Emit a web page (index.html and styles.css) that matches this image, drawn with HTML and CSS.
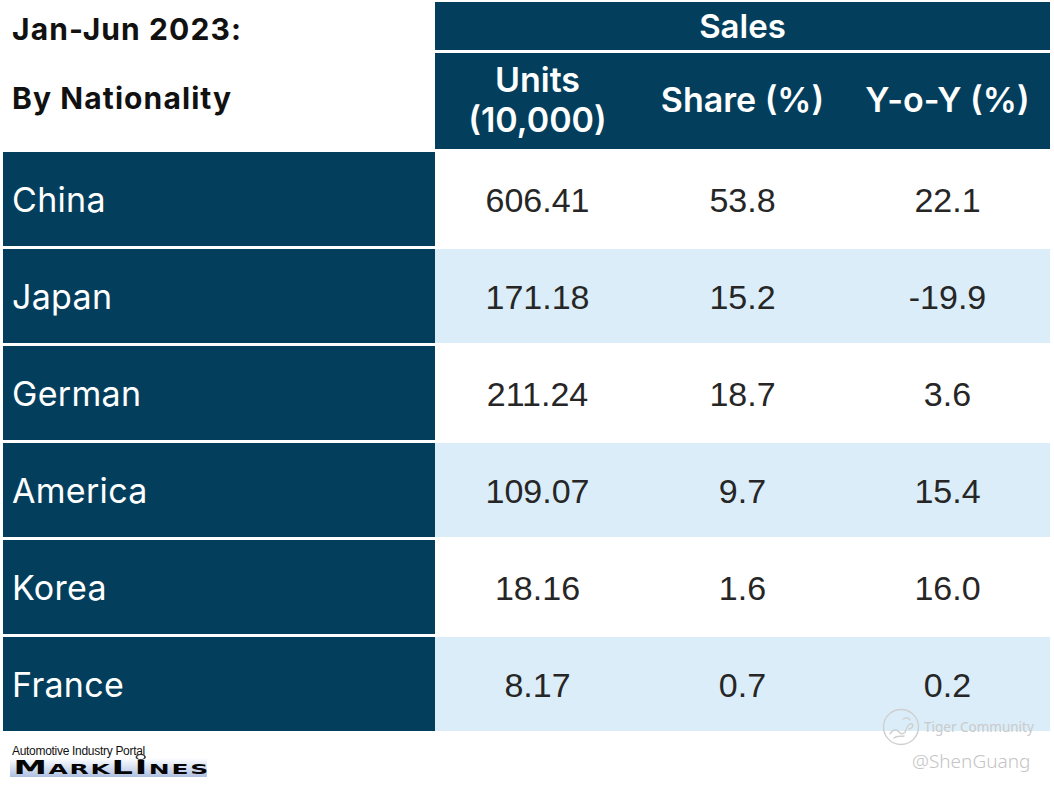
FILE: index.html
```html
<!DOCTYPE html>
<html lang="en">
<head>
<meta charset="utf-8">
<title>Jan-Jun 2023 Sales by Nationality</title>
<link rel="stylesheet" href="styles.css">
</head>
<body>
<div class="page">
  <div class="table">
    <div class="title">
      <div class="title-line">Jan-Jun 2023:</div>
      <div class="title-line">By Nationality</div>
    </div>
    <div class="head head-main">Sales</div>
    <div class="head head-sub">Units<br>(10,000)</div>
    <div class="head head-sub">Share (%)</div>
    <div class="head head-sub">Y-o-Y (%)</div>

    <div class="label">China</div>
    <div class="num">606.41</div><div class="num">53.8</div><div class="num">22.1</div>

    <div class="label">Japan</div>
    <div class="num alt">171.18</div><div class="num alt">15.2</div><div class="num alt">-19.9</div>

    <div class="label">German</div>
    <div class="num">211.24</div><div class="num">18.7</div><div class="num">3.6</div>

    <div class="label">America</div>
    <div class="num alt">109.07</div><div class="num alt">9.7</div><div class="num alt">15.4</div>

    <div class="label">Korea</div>
    <div class="num">18.16</div><div class="num">1.6</div><div class="num">16.0</div>

    <div class="label">France</div>
    <div class="num alt">8.17</div><div class="num alt">0.7</div><div class="num alt">0.2</div>
  </div>

  <div class="logo">
    <div class="logo-tag">Automotive Industry Portal</div>
    <div class="logo-bar">
      <div class="logo-mark"><span class="cap">M</span>ARK<span class="cap">L</span><span class="cap i-dot">I</span>NES</div>
    </div>
  </div>

  <div class="watermark">
    <div class="wm-top">
      <svg class="wm-icon" width="40" height="40" viewBox="0 0 40 40" aria-hidden="true">
        <circle cx="20" cy="20" r="17.5" fill="none" stroke="#cfcfcf" stroke-width="1.4"/>
        <path d="M9 27 C12 22 16 22 18 25 C20 28 24 27 25 23 C26 19 29 16 31 17 C33 18 31 22 28 22" fill="none" stroke="#cfcfcf" stroke-width="1.4" stroke-linecap="round"/>
        <path d="M13 31 C16 28 20 30 23 29" fill="none" stroke="#cfcfcf" stroke-width="1.4" stroke-linecap="round"/>
        <path d="M22 12 C25 10 28 11 29 13" fill="none" stroke="#cfcfcf" stroke-width="1.4" stroke-linecap="round"/>
      </svg>
      <span class="wm-name">Tiger Community</span>
    </div>
    <div class="wm-user">@ShenGuang</div>
  </div>
</div>
</body>
</html>
```

FILE: styles.css
```css
* { box-sizing: border-box; }

html, body {
  margin: 0;
  padding: 0;
  background: #ffffff;
}

.page {
  position: relative;
  width: 1054px;
  height: 786px;
  padding: 2px 0 0 3px;
  font-family: Inter, Lato, "Noto Sans", sans-serif;
}

.table {
  display: grid;
  grid-template-columns: 432px 205px 205px 205px;
  grid-template-rows: 48px 96px repeat(6, 94px);
  row-gap: 3px;
}

.title {
  grid-row: 1 / span 2;
  grid-column: 1;
  display: flex;
  flex-direction: column;
  padding: 9px 0 0 9px;
}

.title-line {
  font-weight: 700;
  font-size: 30px;
  line-height: 36px;
  height: 74px;
  color: #111;
  letter-spacing: 1.1px;
}

.head {
  background: #033f5d;
  color: #ffffff;
  font-weight: 600;
  font-size: 34px;
  display: flex;
  align-items: center;
  justify-content: center;
  text-align: center;
}

.head-main {
  grid-column: 2 / span 3;
  grid-row: 1;
  font-size: 33px;
}

.head-sub {
  grid-row: 2;
  line-height: 40px;
  padding-bottom: 2px;
}

.label {
  grid-column: 1;
  background: #033f5d;
  color: #ffffff;
  font-size: 34px;
  padding-left: 9px;
  display: flex;
  align-items: center;
  letter-spacing: 0.3px;
}

.num {
  display: flex;
  align-items: center;
  justify-content: center;
  font-family: "Liberation Sans", Arial, sans-serif;
  font-size: 34px;
  color: #262626;
  background: #ffffff;
  padding-top: 2px;
}

.num.alt {
  background: #dbedf8;
}

.logo {
  margin: 14px 0 0 7px;
  width: 197px;
}

.logo-tag {
  font-family: "Liberation Sans", Arial, sans-serif;
  font-size: 12px;
  line-height: 13px;
  color: #111;
  letter-spacing: -0.3px;
  padding-left: 2px;
}

.logo-bar {
  height: 19px;
  background: linear-gradient(to bottom, #ffffff 0%, #e3eaf5 35%, #aebfe0 100%);
}

.logo-mark {
  display: inline-block;
  font-family: "DejaVu Sans", sans-serif;
  font-weight: 700;
  font-size: 14.5px;
  line-height: 18px;
  color: #050505;
  letter-spacing: 1px;
  white-space: nowrap;
  padding-left: 2px;
  transform: scaleX(1.72);
  transform-origin: left center;
}

.logo-mark .cap {
  font-size: 19.5px;
}

.logo-mark .i-dot {
  position: relative;
}

.logo-mark .i-dot::before {
  content: "";
  position: absolute;
  left: 1px;
  top: -2px;
  width: 4px;
  height: 4px;
  border: 1px solid #333;
  border-radius: 50%;
}

.watermark {
  position: absolute;
  left: 881px;
  top: 707px;
  width: 170px;
}

.wm-top {
  display: flex;
  align-items: center;
  gap: 2px;
}

.wm-icon {
  display: block;
}

.wm-name {
  font-family: "Noto Sans", sans-serif;
  font-size: 13.5px;
  color: #cacaca;
  margin-left: 1px;
}

.wm-user {
  font-family: "Noto Sans", sans-serif;
  font-weight: 300;
  font-size: 19px;
  color: #c4c4c4;
  margin: 1px 0 0 31px;
}
```
